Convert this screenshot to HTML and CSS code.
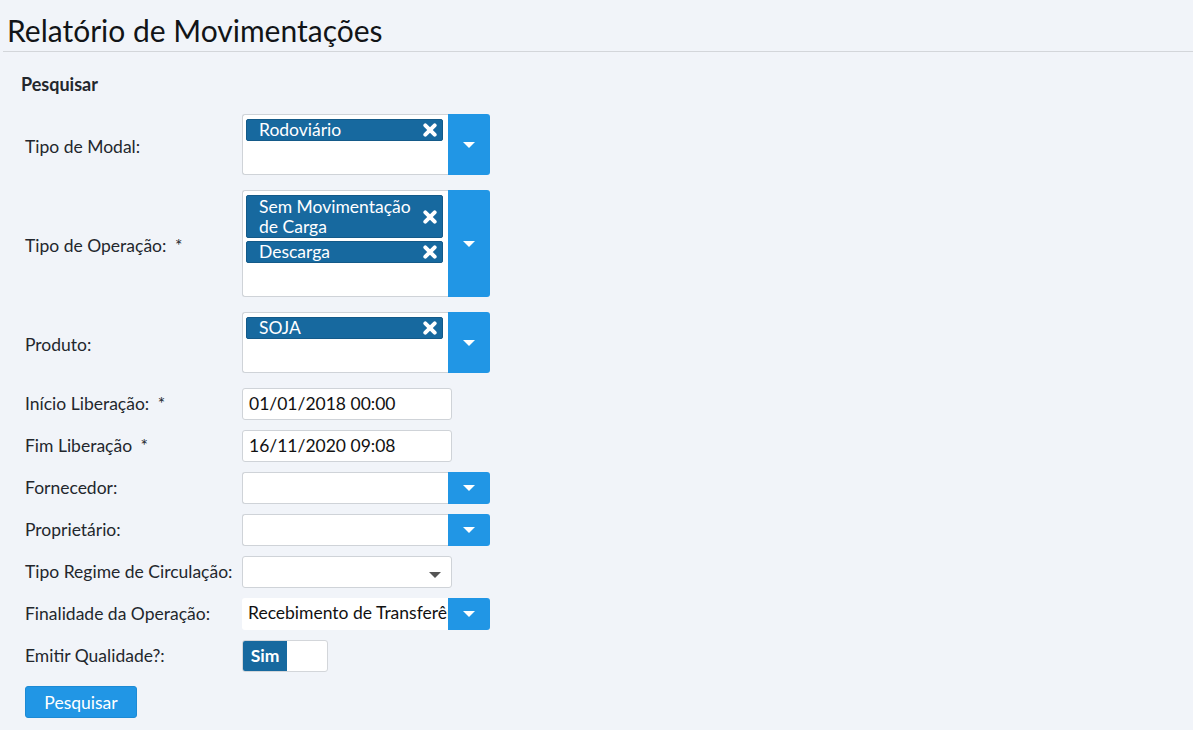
FILE: index.html
```html
<!DOCTYPE html>
<html lang="pt">
<head>
<meta charset="utf-8">
<title>Relatório de Movimentações</title>
<link rel="stylesheet" href="styles.css">
</head>
<body>
<header class="page-header">
  <h1 class="page-title">Relatório de Movimentações</h1>
</header>
<main class="panel">
  <h2 class="panel-title">Pesquisar</h2>
  <form class="form">
    <div class="row row-multi">
      <label class="label">Tipo de Modal:</label>
      <div class="multi">
        <div class="multi-box">
          <span class="tag"><span class="tag-text">Rodoviário</span><svg class="tag-x" viewBox="0 0 12 12"><path d="M2 2L10 10M10 2L2 10"/></svg></span>
          <div class="multi-input"></div>
        </div>
        <span class="btn-drop"><span class="caret"></span></span>
      </div>
    </div>
    <div class="row row-multi">
      <label class="label">Tipo de Operação: <span class="req">*</span></label>
      <div class="multi">
        <div class="multi-box">
          <span class="tag tag-wrap"><span class="tag-text">Sem Movimentação de Carga</span><svg class="tag-x" viewBox="0 0 12 12"><path d="M2 2L10 10M10 2L2 10"/></svg></span>
          <span class="tag"><span class="tag-text">Descarga</span><svg class="tag-x" viewBox="0 0 12 12"><path d="M2 2L10 10M10 2L2 10"/></svg></span>
          <div class="multi-input"></div>
        </div>
        <span class="btn-drop"><span class="caret"></span></span>
      </div>
    </div>
    <div class="row row-multi">
      <label class="label">Produto:</label>
      <div class="multi">
        <div class="multi-box">
          <span class="tag"><span class="tag-text">SOJA</span><svg class="tag-x" viewBox="0 0 12 12"><path d="M2 2L10 10M10 2L2 10"/></svg></span>
          <div class="multi-input"></div>
        </div>
        <span class="btn-drop"><span class="caret"></span></span>
      </div>
    </div>
    <div class="row">
      <label class="label">Início Liberação: <span class="req">*</span></label>
      <div class="text-input">01/01/2018 00:00</div>
    </div>
    <div class="row">
      <label class="label">Fim Liberação <span class="req">*</span></label>
      <div class="text-input">16/11/2020 09:08</div>
    </div>
    <div class="row">
      <label class="label">Fornecedor:</label>
      <div class="combo">
        <div class="combo-box"></div>
        <span class="btn-drop"><span class="caret"></span></span>
      </div>
    </div>
    <div class="row">
      <label class="label">Proprietário:</label>
      <div class="combo">
        <div class="combo-box"></div>
        <span class="btn-drop"><span class="caret"></span></span>
      </div>
    </div>
    <div class="row">
      <label class="label">Tipo Regime de Circulação:</label>
      <div class="select"><span class="caret caret-dark"></span></div>
    </div>
    <div class="row">
      <label class="label">Finalidade da Operação:</label>
      <div class="combo">
        <div class="combo-box combo-text">Recebimento de Transferência</div>
        <span class="btn-drop"><span class="caret"></span></span>
      </div>
    </div>
    <div class="row">
      <label class="label">Emitir Qualidade?:</label>
      <div class="toggle"><span class="toggle-on">Sim</span><span class="toggle-off"></span></div>
    </div>
    <div class="actions">
      <button type="button" class="btn-primary">Pesquisar</button>
    </div>
  </form>
</main>
</body>
</html>
```

FILE: styles.css
```css
* { box-sizing: border-box; }
html, body {
  margin: 0;
  padding: 0;
  background: #f1f4f9;
  font-family: Lato, "Open Sans", sans-serif;
  color: #1e2126;
}
.page-header {
  margin: 0 0 0 3px;
  border-bottom: 1px solid #d3d6da;
  height: 52px;
}
.page-title {
  margin: 0;
  padding: 12px 0 0 4px;
  font-size: 30px;
  font-weight: 400;
  line-height: 36px;
  color: #121417;
}
.panel {
  padding: 22px 0 0 21px;
}
.panel-title {
  margin: 0 0 20px 0;
  font-size: 18px;
  font-weight: 700;
  line-height: 20px;
  color: #23272d;
}
.form {
  padding-left: 4px;
}
.row {
  display: grid;
  grid-template-columns: 217px auto;
  align-items: center;
  margin-bottom: 10px;
}
.row-multi { margin-bottom: 15px; }
.row-multi .label { padding-top: 4px; }
.label {
  font-size: 17.5px;
  line-height: 20px;
  color: #23272d;
}
.req { margin-left: 4px; }
.multi, .combo {
  display: flex;
  width: 248px;
}
.multi-box {
  width: 206px;
  background: #fff;
  border: 1px solid #cfd3d8;
  border-right: none;
  border-radius: 3px 0 0 3px;
  padding: 4px 5px 0 3px;
  display: flex;
  flex-direction: column;
  gap: 3px;
}
.multi-input { height: 30px; }
.tag {
  display: flex;
  align-items: center;
  justify-content: space-between;
  background: #17699f;
  border: 1px solid #145a89;
  border-radius: 2px;
  color: #fff;
  font-size: 17.5px;
  line-height: 20px;
  padding: 0 5px 0 12px;
  height: 22px;
}
.tag-wrap { height: 43px; }
.tag-text { max-width: 165px; }
.tag-x {
  width: 14px;
  height: 14px;
  flex: none;
  stroke: #fff;
  stroke-width: 3.4;
  stroke-linecap: round;
  fill: none;
}
.btn-drop {
  width: 42px;
  background: #2196e5;
  border-radius: 0 3px 3px 0;
  display: flex;
  align-items: center;
  justify-content: center;
}
.caret {
  width: 0;
  height: 0;
  border-left: 6px solid transparent;
  border-right: 6px solid transparent;
  border-top: 6px solid #fff;
}
.caret-dark { border-top-color: #555; }
.text-input, .combo-box, .select {
  height: 32px;
  background: #fff;
  border: 1px solid #cfd3d8;
  border-radius: 3px;
  font-size: 17.5px;
  line-height: 30px;
  padding-left: 6px;
  color: #111;
}
.text-input, .select { width: 210px; }
.combo-box {
  width: 206px;
  border-right: none;
  border-radius: 3px 0 0 3px;
}
.combo-text {
  white-space: nowrap;
  overflow: hidden;
  border: none;
  padding-left: 6px;
}
.select {
  display: flex;
  align-items: center;
  justify-content: flex-end;
  padding-right: 10px;
}
.select .caret { margin-top: 5px; }
.toggle {
  display: flex;
  width: 86px;
  height: 32px;
  border: 1px solid #d3d6da;
  border-radius: 3px;
  background: #fff;
  overflow: hidden;
}
.toggle-on {
  width: 44px;
  background: #17699f;
  color: #fff;
  font-weight: 700;
  font-size: 17.5px;
  line-height: 30px;
  text-align: center;
}
.toggle-off { flex: 1; }
.actions { margin-top: 14px; }
.btn-primary {
  width: 112px;
  height: 32px;
  background: #2196e5;
  border: 1px solid #1d8ad4;
  border-radius: 3px;
  color: #fff;
  font-family: Lato, "Open Sans", sans-serif;
  font-size: 17.5px;
  padding: 0;
}
```
